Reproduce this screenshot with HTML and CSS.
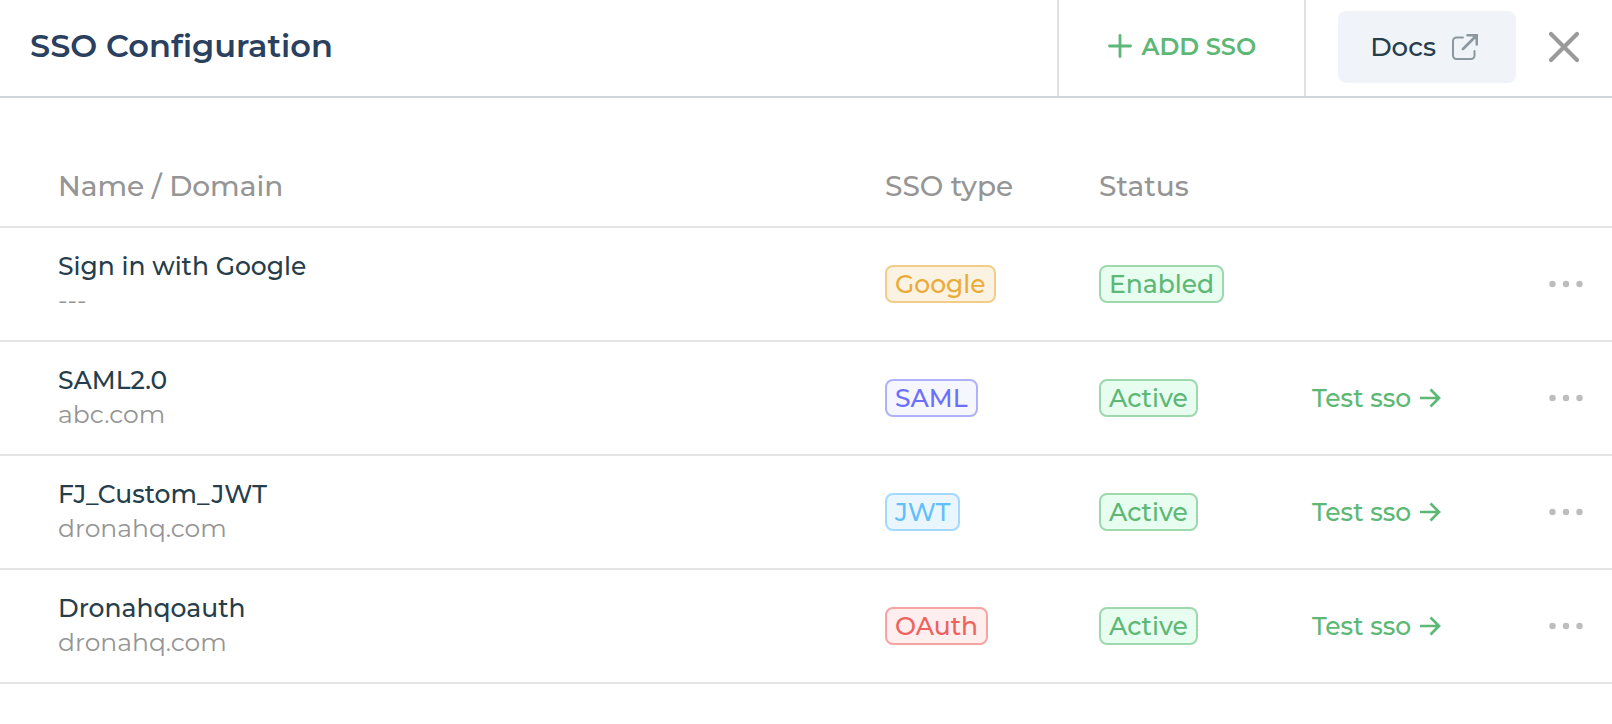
FILE: index.html
```
<!DOCTYPE html>
<html lang="en">
<head>
<meta charset="utf-8">
<meta name="viewport" content="width=device-width, initial-scale=1">
<title>SSO Configuration</title>
<link rel="stylesheet" href="styles.css">
</head>
<body>
<svg class="sprite" aria-hidden="true">
  <symbol id="arrow" viewBox="0 0 22 20"><path d="M1 10H20M11.500 1.500l8.500 8.500-8.500 8.500" fill="none" stroke="currentColor" stroke-width="2.700" stroke-linejoin="miter"/></symbol>
  <symbol id="dots" viewBox="0 0 34 8"><circle cx="3.500" cy="4" r="3.200"/><circle cx="17" cy="4" r="3.200"/><circle cx="30.500" cy="4" r="3.200"/></symbol>
</svg>
<header class="header">
  <h1 class="title">SSO Configuration</h1>
  <button class="add" type="button">
    <svg class="add-icon" viewBox="0 0 24 24" aria-hidden="true"><path d="M12 1.500v21M1.500 12h21" fill="none" stroke="currentColor" stroke-width="2.800" stroke-linecap="round"/></svg>
    ADD SSO
  </button>
  <a class="docs" href="#docs">
    Docs
    <svg class="docs-icon" viewBox="0 0 26 26" aria-hidden="true"><path d="M11 3.500H4.500a3.500 3.500 0 0 0-3.500 3.500v14.500A3.500 3.500 0 0 0 4.500 25h14.500a3.500 3.500 0 0 0 3.500-3.500V17" fill="none" stroke="currentColor" stroke-width="2" stroke-linecap="round"/><path d="M11 15L23.500 2.500" fill="none" stroke="currentColor" stroke-width="2.800" stroke-linecap="round"/><path d="M15.500 0H26V10.500a1 1 0 0 1-2.500 0V5.500L20.500 2.500H15.500a1 1 0 0 1 0-2.500z" fill="currentColor"/></svg>
  </a>
  <button class="close" type="button" aria-label="Close">
    <svg class="close-icon" viewBox="0 0 32 32" aria-hidden="true"><path d="M3 3l26 26M29 3L3 29" fill="none" stroke="currentColor" stroke-width="4.200" stroke-linecap="round"/></svg>
  </button>
</header>
<main class="content">
  <table class="table">
    <colgroup><col><col class="col-type"><col class="col-status"><col class="col-test"><col class="col-more"></colgroup>
    <thead>
      <tr><th scope="col">Name / Domain</th><th scope="col">SSO type</th><th scope="col">Status</th><td></td><td></td></tr>
    </thead>
    <tbody>
      <tr>
        <td><div class="name">Sign in with Google</div><div class="domain">---</div></td>
        <td><span class="badge google">Google</span></td>
        <td><span class="badge active">Enabled</span></td>
        <td></td>
        <td><button class="more" type="button" aria-label="More options"><svg class="dots"><use href="#dots"/></svg></button></td>
      </tr>
      <tr>
        <td><div class="name">SAML2.0</div><div class="domain">abc.com</div></td>
        <td><span class="badge saml">SAML</span></td>
        <td><span class="badge active">Active</span></td>
        <td><a class="test" href="#test">Test sso <svg class="arrow" aria-hidden="true"><use href="#arrow"/></svg></a></td>
        <td><button class="more" type="button" aria-label="More options"><svg class="dots"><use href="#dots"/></svg></button></td>
      </tr>
      <tr>
        <td><div class="name">FJ_Custom_JWT</div><div class="domain">dronahq.com</div></td>
        <td><span class="badge jwt">JWT</span></td>
        <td><span class="badge active">Active</span></td>
        <td><a class="test" href="#test">Test sso <svg class="arrow" aria-hidden="true"><use href="#arrow"/></svg></a></td>
        <td><button class="more" type="button" aria-label="More options"><svg class="dots"><use href="#dots"/></svg></button></td>
      </tr>
      <tr>
        <td><div class="name">Dronahqoauth</div><div class="domain">dronahq.com</div></td>
        <td><span class="badge oauth">OAuth</span></td>
        <td><span class="badge active">Active</span></td>
        <td><a class="test" href="#test">Test sso <svg class="arrow" aria-hidden="true"><use href="#arrow"/></svg></a></td>
        <td><button class="more" type="button" aria-label="More options"><svg class="dots"><use href="#dots"/></svg></button></td>
      </tr>
    </tbody>
  </table>
</main>
</body>
</html>
```
FILE: styles.css
```
* { box-sizing: border-box; }
body {
  margin: 0;
  background: #fff;
  color: #263e4c;
  font-family: Montserrat, Inter, "Liberation Sans", sans-serif;
  font-size: 25px;
  font-weight: 500;
}
button {
  border: 0;
  padding: 0;
  background: none;
  font: inherit;
  cursor: pointer;
}
a { text-decoration: none; }
svg { display: block; flex: none; }
.sprite { display: none; }

.header {
  display: flex;
  align-items: stretch;
  border-bottom: 2px solid #d1d6db;
  padding: 0 32px 0 30px;
}
.title {
  flex: 1;
  align-self: center;
  margin: 0;
  padding-bottom: 4px;
  color: #2b3f5f;
  font-size: 32px;
  font-weight: 600;
  line-height: 40px;
}
.add {
  display: flex;
  align-items: center;
  gap: 9px;
  padding: 0 48px 4px 49px;
  border: solid #e1e1e1;
  border-width: 0 2px;
  color: #5cb874;
  font-size: 24px;
  font-weight: 600;
}
.add-icon { width: 24px; height: 24px; }
.docs {
  display: flex;
  align-items: center;
  gap: 16px;
  margin: 11px 32px 13px;
  padding: 20px 38px 20px 32px;
  border-radius: 8px;
  background: #f0f4f9;
  color: #263e4c;
  font-size: 26px;
  line-height: 32px;
}
.docs-icon { width: 26px; height: 26px; color: #8b989f; }
.close { padding-bottom: 2px; color: #9a9a9a; }
.close-icon { width: 32px; height: 32px; }

.content { padding-top: 48px; }
.table {
  width: 100%;
  table-layout: fixed;
  border-collapse: separate;
  border-spacing: 0;
}
.col-type { width: 214px; }
.col-status { width: 213px; }
.col-test { width: 200px; }
.col-more { width: 100px; }
.table th, .table td {
  padding: 22px 0;
  border-bottom: 2px solid #e4e4e4;
  text-align: left;
  vertical-align: middle;
}
.table th {
  color: #959595;
  font-size: 28px;
  font-weight: 500;
  line-height: 36px;
}
.table th:first-child, .table td:first-child { padding-left: 58px; }
.table td:first-child { padding-top: 21px; padding-bottom: 23px; }
.table td:last-child { padding-right: 29px; }
.name, .domain { line-height: 34px; }
.domain { color: #959595; font-weight: 400; }
.badge {
  display: block;
  width: fit-content;
  padding: 0 8px;
  border: 2px solid;
  border-radius: 8px;
  line-height: 34px;
}
.google { color: #ebab3a; background: #fbf3e2; border-color: #f3cd87; }
.active { color: #5cb874; background: #e7fdf0; border-color: #9dd9ac; }
.saml { color: #6b6ffb; background: #f6f6ff; border-color: #b0b1fb; }
.jwt { color: #62bffa; background: #eaf6fe; border-color: #a3d9fc; }
.oauth { color: #ee625e; background: #feeeee; border-color: #f6a3a1; }
.test {
  display: flex;
  align-items: center;
  gap: 8px;
  color: #5cb874;
  line-height: 34px;
}
.arrow { width: 22px; height: 20px; }
.more { display: block; margin-left: auto; }
.dots { width: 34px; height: 8px; fill: #bdbdbd; }
```
